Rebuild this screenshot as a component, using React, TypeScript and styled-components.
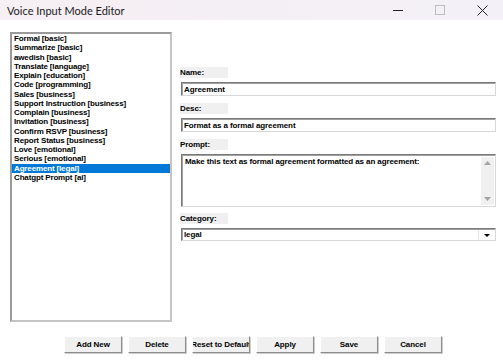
import React from "react";
import styled, { createGlobalStyle } from "styled-components";

const Global = createGlobalStyle`
  html, body { margin: 0; padding: 0; background: #ffffff; }
  body { width: 503px; height: 360px; overflow: hidden; }
`;

const Window = styled.div`
  width: 503px;
  height: 360px;
  display: flex;
  flex-direction: column;
  background: #ffffff;
  font-family: "Liberation Sans", Arial, sans-serif;
`;

const TitleBar = styled.div`
  height: 20px;
  flex: none;
  display: flex;
  align-items: center;
  background: linear-gradient(to right, #f6eff3, #f3f0f7);
  padding-left: 7px;
`;

const Title = styled.div`
  flex: 1;
  font-family: Lato, "Noto Sans", sans-serif;
  font-size: 11px;
  color: #1a1a1a;
`;

const Controls = styled.div`
  display: flex;
  height: 20px;
`;

const Ctl = styled.div`
  width: 42px;
  height: 20px;
  display: flex;
  align-items: center;
  justify-content: center;
`;

const Body = styled.div`
  flex: 1;
  display: flex;
  flex-direction: column;
  padding: 12px 0 0 10px;
`;

const Main = styled.div`
  display: flex;
  gap: 8px;
`;

const ListBox = styled.div`
  width: 158px;
  height: 286px;
  border: 2px solid;
  border-color: #9a9a9a #c4c4c4 #c4c4c4 #9a9a9a;
  background: #fff;
`;

const Item = styled.div<{ $selected?: boolean }>`
  height: 9.25px;
  line-height: 9.25px;
  padding-left: 2px;
  font-size: 8px;
  font-weight: bold;
  letter-spacing: -0.15px;
  white-space: nowrap;
  color: ${(p) => (p.$selected ? "#ffffff" : "#000000")};
  background: ${(p) => (p.$selected ? "#0078d7" : "transparent")};
`;

const Form = styled.div`
  width: 316px;
  display: flex;
  flex-direction: column;
  padding-top: 35px;
`;

const Label = styled.div`
  width: 48px;
  height: 11px;
  background: #f0f0f0;
  font-size: 8px;
  font-weight: bold;
  letter-spacing: -0.1px;
  line-height: 11px;
  color: #000;
  margin-bottom: 4px;
`;

const Input = styled.div`
  height: 14px;
  margin-left: 1px;
  border: 1px solid;
  border-color: #7a7a7a #d8d8d8 #d8d8d8 #7a7a7a;
  box-shadow: inset 1px 1px 0 #a0a0a0;
  font-size: 8px;
  font-weight: bold;
  letter-spacing: -0.1px;
  line-height: 13px;
  padding-left: 2px;
  box-sizing: border-box;
  margin-bottom: 7px;
`;

const Area = styled.div`
  height: 53px;
  margin-left: 1px;
  border: 1px solid;
  border-color: #7a7a7a #d8d8d8 #d8d8d8 #7a7a7a;
  box-shadow: inset 1px 1px 0 #a0a0a0;
  box-sizing: border-box;
  display: flex;
  margin-bottom: 6px;
`;

const AreaText = styled.div`
  flex: 1;
  font-size: 8px;
  font-weight: bold;
  letter-spacing: -0.1px;
  padding: 2px 0 0 3px;
  line-height: 10px;
`;

const VScroll = styled.div`
  width: 13px;
  margin: 2px 1px 1px 0;
  background: #f0f0f0;
  display: flex;
  flex-direction: column;
  justify-content: space-between;
  align-items: center;
  padding: 4px 0 4px;
`;

const Select = styled.div`
  height: 13px;
  margin-left: 1px;
  border: 1px solid;
  border-color: #7a7a7a #d8d8d8 #d8d8d8 #7a7a7a;
  box-shadow: inset 1px 1px 0 #a0a0a0;
  box-sizing: border-box;
  display: flex;
  font-size: 8px;
  font-weight: bold;
  letter-spacing: -0.1px;
  line-height: 11px;
`;

const SelectText = styled.div`
  flex: 1;
  padding-left: 2px;
`;

const DropBtn = styled.div`
  width: 16px;
  border-left: 1px solid #e6e6e6;
  background: #fdfdfd;
  display: flex;
  align-items: center;
  justify-content: center;
  margin-top: 1px;
`;

const Buttons = styled.div`
  display: flex;
  gap: 6px;
  margin-top: 14px;
  margin-left: 54px;
`;

const Button = styled.div`
  width: 58px;
  height: 17px;
  box-sizing: border-box;
  background: #f0f0f0;
  border: 1px solid;
  border-color: #ffffff #8c8c8c #8c8c8c #ffffff;
  box-shadow: 1px 1px 0 #cfcfcf;
  font-size: 8px;
  font-weight: bold;
  letter-spacing: -0.1px;
  line-height: 15px;
  white-space: nowrap;
  overflow: hidden;
  display: flex;
  justify-content: center;
`;

const items = [
  "Formal [basic]",
  "Summarize [basic]",
  "awedish [basic]",
  "Translate [language]",
  "Explain [education]",
  "Code [programming]",
  "Sales [business]",
  "Support Instruction [business]",
  "Complain [business]",
  "Invitation [business]",
  "Confirm RSVP [business]",
  "Report Status [business]",
  "Love [emotional]",
  "Serious [emotional]",
  "Agreement [legal]",
  "Chatgpt Prompt [ai]",
];

export default function App() {
  return (
    <>
      <Global />
      <Window>
        <TitleBar>
          <Title>Voice Input Mode Editor</Title>
          <Controls>
            <Ctl>
              <svg width="10" height="10" viewBox="0 0 10 10">
                <line x1="0" y1="5.5" x2="10" y2="5.5" stroke="#222" strokeWidth="1" />
              </svg>
            </Ctl>
            <Ctl>
              <svg width="10" height="10" viewBox="0 0 10 10">
                <rect x="0.5" y="0.5" width="9" height="9" fill="none" stroke="#bdbdbd" strokeWidth="1" />
              </svg>
            </Ctl>
            <Ctl>
              <svg width="11" height="11" viewBox="0 0 11 11">
                <path d="M0.5 0.5 L10.5 10.5 M10.5 0.5 L0.5 10.5" stroke="#222" strokeWidth="1" />
              </svg>
            </Ctl>
          </Controls>
        </TitleBar>
        <Body>
          <Main>
            <ListBox>
              {items.map((it) => (
                <Item key={it} $selected={it === "Agreement [legal]"}>
                  {it}
                </Item>
              ))}
            </ListBox>
            <Form>
              <Label>Name:</Label>
              <Input>Agreement</Input>
              <Label>Desc:</Label>
              <Input>Format as a formal agreement</Input>
              <Label>Prompt:</Label>
              <Area>
                <AreaText>Make this text as formal agreement formatted as an agreement:</AreaText>
                <VScroll>
                  <svg width="7" height="4" viewBox="0 0 7 4">
                    <path d="M0 4 L3.5 0 L7 4 Z" fill="#a3a3a3" />
                  </svg>
                  <svg width="7" height="4" viewBox="0 0 7 4">
                    <path d="M0 0 L3.5 4 L7 0 Z" fill="#a3a3a3" />
                  </svg>
                </VScroll>
              </Area>
              <Label>Category:</Label>
              <Select>
                <SelectText>legal</SelectText>
                <DropBtn>
                  <svg width="6" height="3" viewBox="0 0 6 3">
                    <path d="M0 0 L3 3 L6 0 Z" fill="#000" />
                  </svg>
                </DropBtn>
              </Select>
            </Form>
          </Main>
          <Buttons>
            <Button>Add New</Button>
            <Button>Delete</Button>
            <Button>Reset to Default</Button>
            <Button>Apply</Button>
            <Button>Save</Button>
            <Button>Cancel</Button>
          </Buttons>
        </Body>
      </Window>
    </>
  );
}
